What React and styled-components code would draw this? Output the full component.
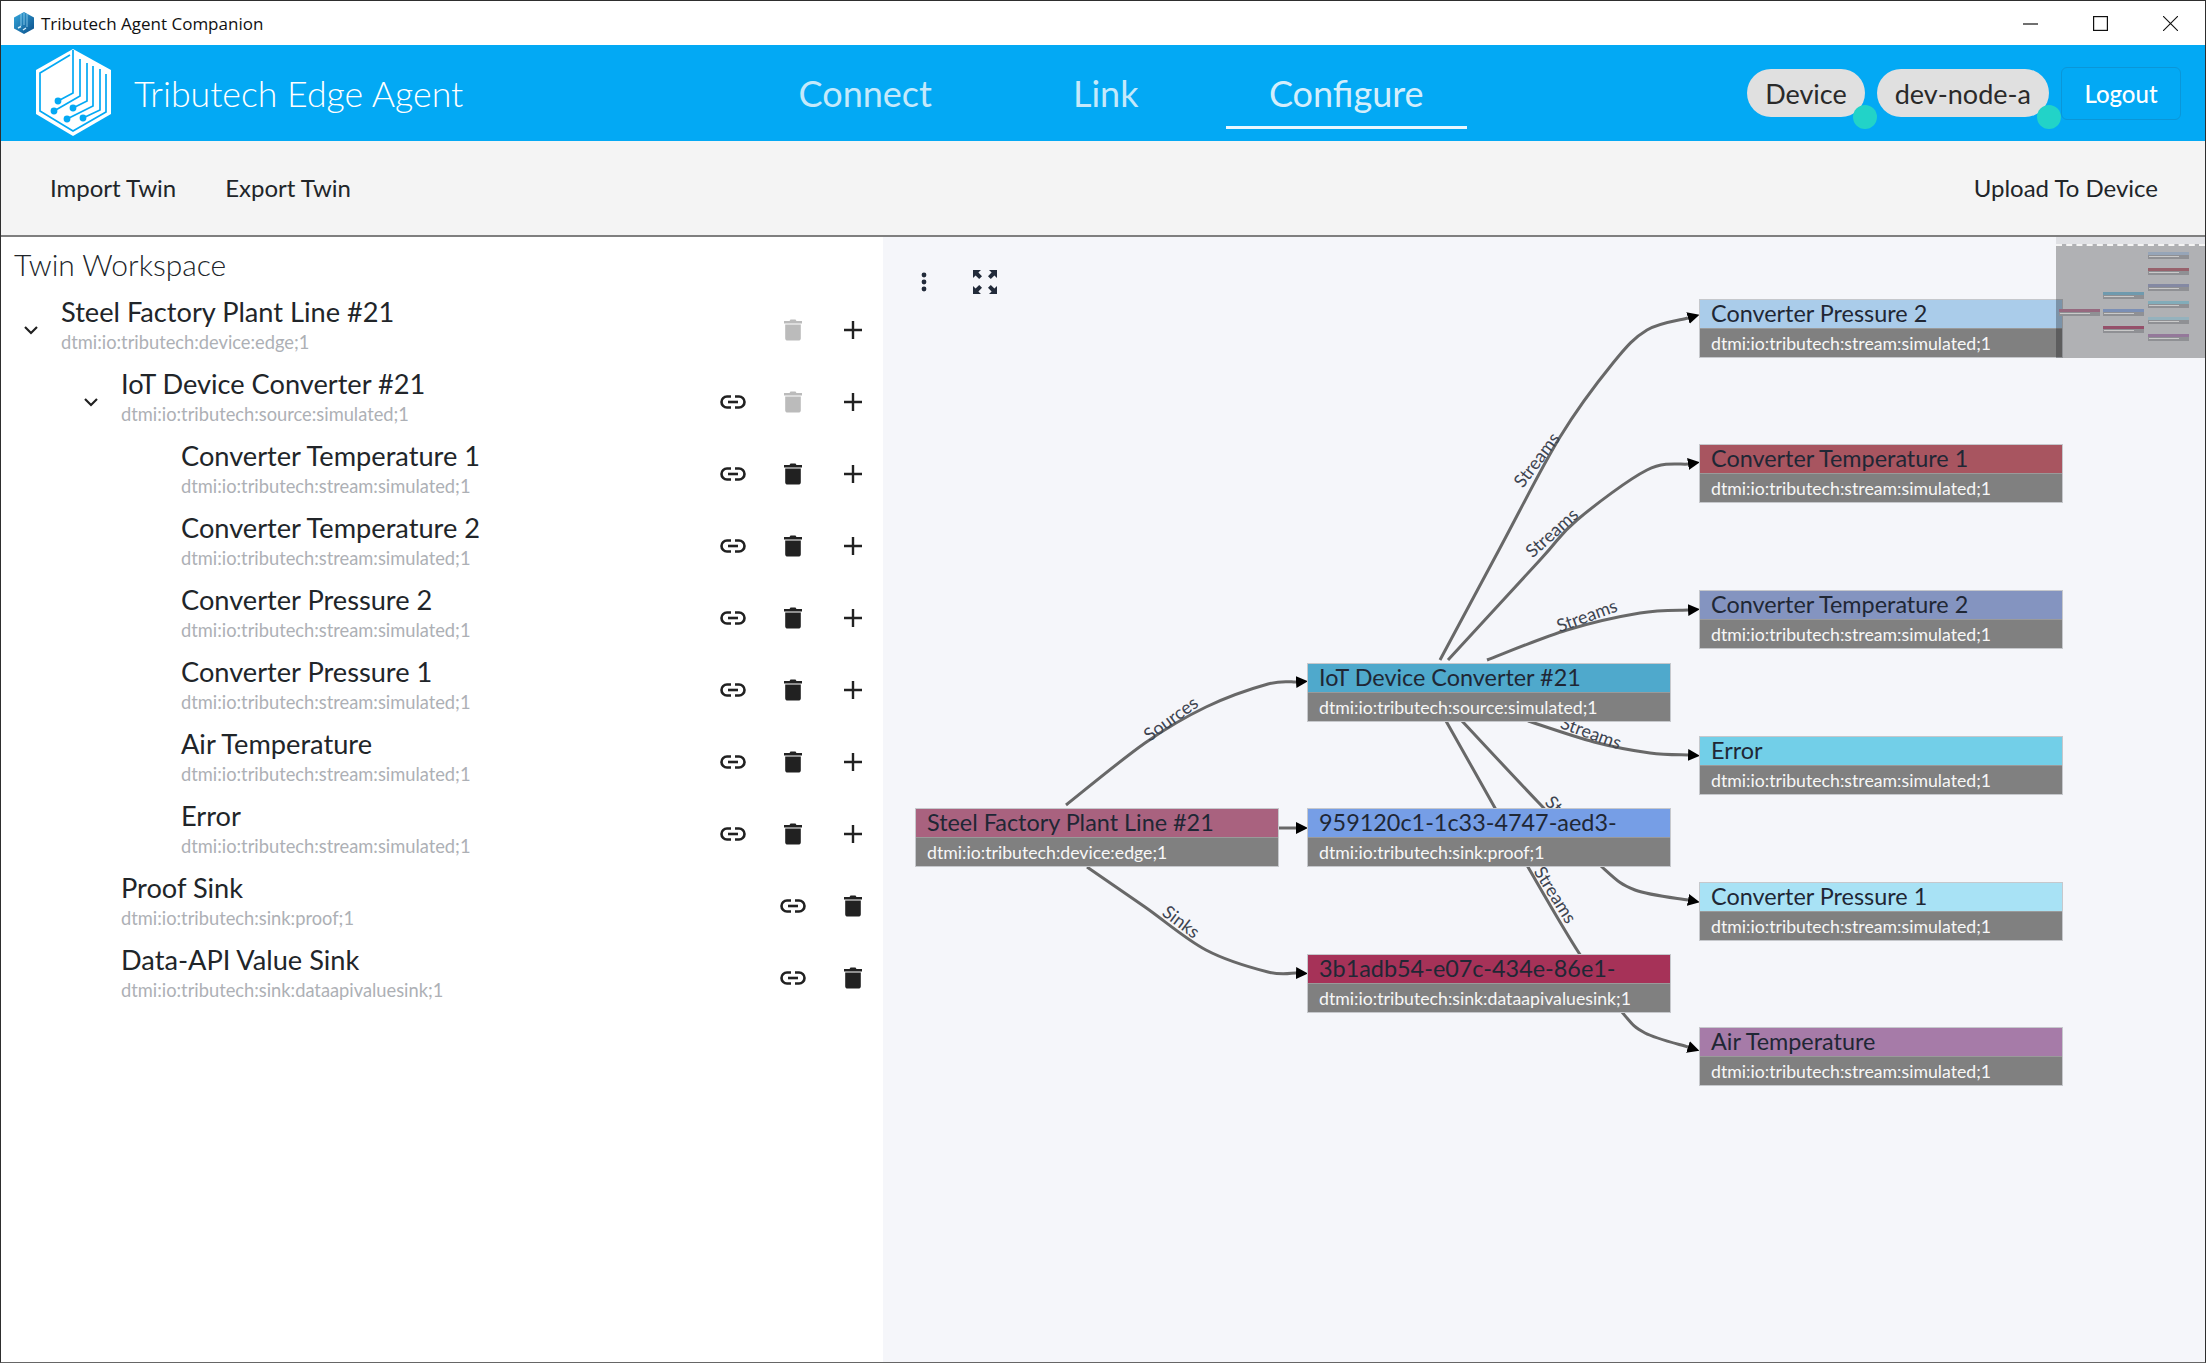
import styled, { createGlobalStyle } from "styled-components";

const GlobalStyle = createGlobalStyle`
  html, body {
    margin: 0;
    padding: 0;
    background: #fff;
  }
  * {
    box-sizing: border-box;
  }
`;

const CANVAS_X = 883;
const CANVAS_Y = 237;

const treeRows = [
  { depth: 0, open: true, name: "Steel Factory Plant Line #21", type: "dtmi:io:tributech:device:edge;1", actions: ["trash-off", "plus"] },
  { depth: 1, open: true, name: "IoT Device Converter #21", type: "dtmi:io:tributech:source:simulated;1", actions: ["link", "trash-off", "plus"] },
  { depth: 2, name: "Converter Temperature 1", type: "dtmi:io:tributech:stream:simulated;1", actions: ["link", "trash", "plus"] },
  { depth: 2, name: "Converter Temperature 2", type: "dtmi:io:tributech:stream:simulated;1", actions: ["link", "trash", "plus"] },
  { depth: 2, name: "Converter Pressure 2", type: "dtmi:io:tributech:stream:simulated;1", actions: ["link", "trash", "plus"] },
  { depth: 2, name: "Converter Pressure 1", type: "dtmi:io:tributech:stream:simulated;1", actions: ["link", "trash", "plus"] },
  { depth: 2, name: "Air Temperature", type: "dtmi:io:tributech:stream:simulated;1", actions: ["link", "trash", "plus"] },
  { depth: 2, name: "Error", type: "dtmi:io:tributech:stream:simulated;1", actions: ["link", "trash", "plus"] },
  { depth: 1, name: "Proof Sink", type: "dtmi:io:tributech:sink:proof;1", actions: ["link", "trash"] },
  { depth: 1, name: "Data-API Value Sink", type: "dtmi:io:tributech:sink:dataapivaluesink;1", actions: ["link", "trash"] },
];

const nodes = [
  { x: 915, y: 808, color: "#a9627f", name: "Steel Factory Plant Line #21", type: "dtmi:io:tributech:device:edge;1" },
  { x: 1307, y: 663, color: "#4fa9cc", name: "IoT Device Converter #21", type: "dtmi:io:tributech:source:simulated;1" },
  { x: 1307, y: 808, color: "#769ee6", name: "959120c1-1c33-4747-aed3-", type: "dtmi:io:tributech:sink:proof;1" },
  { x: 1307, y: 954, color: "#a63258", name: "3b1adb54-e07c-434e-86e1-", type: "dtmi:io:tributech:sink:dataapivaluesink;1" },
  { x: 1699, y: 299, color: "#aaccea", name: "Converter Pressure 2", type: "dtmi:io:tributech:stream:simulated;1" },
  { x: 1699, y: 444, color: "#a85560", name: "Converter Temperature 1", type: "dtmi:io:tributech:stream:simulated;1" },
  { x: 1699, y: 590, color: "#8494c0", name: "Converter Temperature 2", type: "dtmi:io:tributech:stream:simulated;1" },
  { x: 1699, y: 736, color: "#72cfe8", name: "Error", type: "dtmi:io:tributech:stream:simulated;1" },
  { x: 1699, y: 882, color: "#a8e2f5", name: "Converter Pressure 1", type: "dtmi:io:tributech:stream:simulated;1" },
  { x: 1699, y: 1027, color: "#a67ba8", name: "Air Temperature", type: "dtmi:io:tributech:stream:simulated;1" },
];

const edges = [
  [[1440, 660], [1500, 548], [1560, 437], [1613, 363], [1647, 330], [1688, 318]],
  [[1448, 660], [1540, 560], [1577, 520], [1647, 470], [1688, 464]],
  [[1487, 660], [1567, 630], [1640, 613], [1688, 610]],
  [[1528, 721], [1594, 742], [1650, 753], [1688, 755]],
  [[1462, 721], [1538, 802], [1602, 867], [1635, 890], [1688, 900]],
  [[1446, 721], [1495, 808], [1528, 867], [1579, 953], [1622, 1012], [1645, 1033], [1688, 1047]],
  [[1066, 805], [1145, 743], [1206, 707], [1268, 684], [1296, 682]],
  [[1279, 828], [1296, 828]],
  [[1087, 867], [1145, 907], [1206, 950], [1268, 972], [1296, 973]],
];

const edgeLabels = [
  { x: 1537, y: 460, angle: -53, text: "Streams" },
  { x: 1552, y: 533, angle: -42, text: "Streams" },
  { x: 1587, y: 616, angle: -20, text: "Streams" },
  { x: 1591, y: 733, angle: 20, text: "Streams" },
  { x: 1570, y: 822, angle: 47, text: "Streams" },
  { x: 1555, y: 895, angle: 58, text: "Streams" },
  { x: 1171, y: 719, angle: -36, text: "Sources" },
  { x: 1181, y: 922, angle: 37, text: "Sinks" },
];

// minimap boxes, in minimap pixels
const miniNodes = [
  { x: 3, y: 72, color: "#96697f" },
  { x: 47, y: 55, color: "#6f9aae" },
  { x: 47, y: 72, color: "#7b8fb5" },
  { x: 47, y: 89, color: "#95506a" },
  { x: 92, y: 15, color: "#96a5b8" },
  { x: 92, y: 31, color: "#97626c" },
  { x: 92, y: 47, color: "#8489a3" },
  { x: 92, y: 64, color: "#82acb9" },
  { x: 92, y: 80, color: "#95b2bd" },
  { x: 92, y: 97, color: "#94789a" },
];

// through-point smoothing, good enough for dagre-looking edges
const toPath = (pts) => {
  let d = `M${pts[0][0]} ${pts[0][1]}`;
  for (let i = 0; i < pts.length - 1; i++) {
    const p0 = pts[i - 1] || pts[i];
    const p1 = pts[i];
    const p2 = pts[i + 1];
    const p3 = pts[i + 2] || p2;
    const c1x = p1[0] + (p2[0] - p0[0]) / 6;
    const c1y = p1[1] + (p2[1] - p0[1]) / 6;
    const c2x = p2[0] - (p3[0] - p1[0]) / 6;
    const c2y = p2[1] - (p3[1] - p1[1]) / 6;
    d += ` C${c1x} ${c1y} ${c2x} ${c2y} ${p2[0]} ${p2[1]}`;
  }
  return d;
};

const Window = styled.div`
  width: 2206px;
  height: 1363px;
  display: flex;
  flex-direction: column;
  overflow: hidden;
  border: 1px solid #2e2e2e;
  border-bottom-color: #666;
  font-family: Lato, "Open Sans", sans-serif;
  color: #212529;
`;

const TitleBar = styled.div`
  height: 44px;
  flex: none;
  display: flex;
  align-items: center;
  padding-left: 13px;
  background: #fff;
`;

const TitleText = styled.span`
  margin-left: 7px;
  font-family: "Open Sans", sans-serif;
  font-size: 17px;
  color: #111;
`;

const WindowControls = styled.div`
  margin-left: auto;
  display: flex;
  height: 100%;
`;

const ControlButton = styled.div`
  width: 70px;
  display: flex;
  align-items: center;
  justify-content: center;
`;

const Header = styled.header`
  height: 96px;
  flex: none;
  display: flex;
  align-items: center;
  background: #03a9f4;
  color: #fff;
`;

const Brand = styled.div`
  width: 744px;
  display: flex;
  align-items: center;
  padding-left: 29px;
`;

const BrandName = styled.span`
  margin-left: 18px;
  font-size: 35.7px;
  font-weight: 300;
`;

const Nav = styled.nav`
  display: flex;
  height: 100%;
`;

const NavTab = styled.div`
  width: 240.5px;
  margin-bottom: 12px;
  display: flex;
  align-items: center;
  justify-content: center;
  padding-top: 14px;
  font-size: 36px;
  color: ${(p) => (p.$active ? "#d3eefc" : "#c4e9fb")};
  border-bottom: 3px solid ${(p) => (p.$active ? "#eaf7fe" : "transparent")};
`;

const HeaderRight = styled.div`
  margin-left: auto;
  display: flex;
  align-items: center;
  padding-right: 24px;
`;

const Chip = styled.div`
  position: relative;
  height: 48px;
  padding: 0 18px;
  margin-right: 12px;
  display: flex;
  align-items: center;
  border-radius: 24px;
  background: #e0e0e0;
  color: #2a2a2a;
  font-size: 27px;

  &::after {
    content: "";
    position: absolute;
    right: -12px;
    bottom: -12px;
    width: 24px;
    height: 24px;
    border-radius: 50%;
    background: #22d3c8;
  }
`;

const LogoutButton = styled.div`
  width: 120px;
  height: 53px;
  display: flex;
  align-items: center;
  justify-content: center;
  border: 1px solid #0a96d8;
  border-radius: 6px;
  color: #fff;
  font-size: 24px;
  font-weight: 500;
`;

const Toolbar = styled.div`
  height: 96px;
  flex: none;
  display: flex;
  align-items: center;
  padding: 0 47px 2px 49px;
  background: #f4f4f4;
  border-bottom: 2px solid #7f7f7f;
`;

const ToolButton = styled.div`
  font-size: 24px;
  color: #212529;
  margin-right: ${(p) => (p.$end ? "0" : "49px")};
  margin-left: ${(p) => (p.$end ? "auto" : "0")};
`;

const Main = styled.main`
  flex: 1;
  display: flex;
  min-height: 0;
`;

const TreePanel = styled.section`
  width: 882px;
  flex: none;
  background: #fff;
`;

const PanelTitle = styled.h2`
  margin: 0;
  height: 57px;
  padding: 9px 0 0 13px;
  font-size: 30px;
  line-height: 36px;
  font-weight: 300;
  color: #212529;
`;

const Row = styled.div`
  height: 72px;
  display: flex;
  align-items: center;
  padding-left: ${(p) => p.$depth * 60}px;
`;

const ChevronSlot = styled.div`
  width: 60px;
  flex: none;
  display: flex;
  align-items: center;
  justify-content: center;
`;

const RowText = styled.div`
  flex: 1;
  align-self: flex-start;
  padding-top: 1px;
  margin-left: ${(p) => (p.$leaf ? "60px" : "0")};
`;

const RowName = styled.div`
  font-size: 27.2px;
  line-height: 34px;
  color: #212529;
`;

const RowType = styled.div`
  font-size: 18.3px;
  line-height: 22px;
  margin-top: 2px;
  color: #adb0b5;
`;

const Actions = styled.div`
  display: flex;
  flex: none;
`;

const ActionSlot = styled.div`
  width: 60px;
  display: flex;
  align-items: center;
  justify-content: center;
  color: ${(p) => (p.$off ? "#bbbbbb" : "#212121")};
`;

const Canvas = styled.section`
  position: relative;
  flex: 1;
  overflow: hidden;
  background: #f5f6fa;
`;

const EdgeLayer = styled.svg`
  position: absolute;
  inset: 0;
  width: 100%;
  height: 100%;
`;

const EdgeLine = styled.path`
  fill: none;
  stroke: #686868;
  stroke-width: 3;
`;

const EdgeText = styled.text`
  font-family: Lato, sans-serif;
  font-size: 18px;
  fill: #3d4450;
  text-anchor: middle;
`;

const GraphNode = styled.div`
  position: absolute;
  left: ${(p) => p.$x}px;
  top: ${(p) => p.$y}px;
  width: 364px;
  height: 59px;
  border: 1px solid #c6c8cc;
  background: #808080;
`;

const NodeHead = styled.div`
  height: 29px;
  padding-left: 11px;
  background: ${(p) => p.$color};
  border-bottom: 1px solid #9a9a9a;
  font-size: 23.4px;
  line-height: 27px;
  color: #1f2735;
  white-space: nowrap;
  overflow: hidden;
`;

const NodeSub = styled.div`
  height: 28px;
  padding-left: 11px;
  font-size: 17.7px;
  line-height: 30px;
  color: #f7f7f7;
  white-space: nowrap;
`;

const CanvasTool = styled.div`
  position: absolute;
  left: ${(p) => p.$x}px;
  top: 33px;
  width: 24px;
  height: 24px;
  color: #222b3a;
`;

const Minimap = styled.div`
  position: absolute;
  top: 0;
  right: 0;
  width: 149px;
  height: 121px;
  padding-top: 7px;
  background: rgba(40, 42, 50, 0.1);
`;

const MiniViewport = styled.div`
  position: relative;
  height: 114px;
  border-top: 2px dashed #f4f4f4;
  background: rgba(0, 0, 0, 0.21);
`;

const MiniBox = styled.div`
  position: absolute;
  left: ${(p) => p.$x}px;
  top: ${(p) => p.$y}px;
  width: 41px;
  height: 7px;
  background: #8f9094;
  border-top: 3px solid ${(p) => p.$color};
  filter: blur(0.5px);

  &::after {
    content: "";
    position: absolute;
    left: 1px;
    top: 1px;
    width: 30px;
    height: 1px;
    background: #c9c9c9;
  }
`;

const TrashIcon = () => (
  <svg width="18" height="22" viewBox="0 0 18 22" fill="currentColor">
    <path d="M6.5 0.5h5l1 1.5H18v2.4H0V2h5.5z" />
    <path d="M1.2 5.6h15.6V19a2.6 2.6 0 0 1-2.6 2.6H3.8A2.6 2.6 0 0 1 1.2 19z" />
  </svg>
);

const LinkIcon = () => (
  <svg width="26" height="14" viewBox="0 0 26 14" fill="none" stroke="currentColor" strokeWidth="2.6">
    <path d="M11 1.5H7a5.5 5.5 0 0 0 0 11h4" />
    <path d="M15 1.5h4a5.5 5.5 0 0 1 0 11h-4" />
    <path d="M8 7h10" />
  </svg>
);

const PlusIcon = () => (
  <svg width="18" height="18" viewBox="0 0 18 18" stroke="currentColor" strokeWidth="2.4">
    <path d="M9 0v18M0 9h18" />
  </svg>
);

const Chevron = () => (
  <svg width="14" height="9" viewBox="0 0 14 9" fill="none" stroke="#212121" strokeWidth="2.2">
    <path d="M1 1l6 6 6-6" />
  </svg>
);

const actionIcons = {
  link: <LinkIcon />,
  trash: <TrashIcon />,
  "trash-off": <TrashIcon />,
  plus: <PlusIcon />,
};

const Logo = () => (
  <svg width="86" height="94" viewBox="0 0 86 94">
    <path d="M43 3L81 24V68L43 90L6 68V24z" fill="#fff" />
    <g fill="none" stroke="#03a9f4" strokeWidth="1.7">
      <path d="M40 9L10 27V65L43 85L76 66V28" />
      <path d="M43 4V47L28 55" />
      <path d="M50 13V50L24 65" />
      <path d="M57 17V55L43 62" />
      <path d="M63 20V60L37 73" />
      <path d="M70 23V64L53 72" />
    </g>
    <g fill="#03a9f4">
      <circle cx="28" cy="55" r="3.4" />
      <circle cx="24" cy="65" r="3.4" />
      <circle cx="43" cy="62" r="3.4" />
      <circle cx="37" cy="73" r="3.4" />
      <circle cx="53" cy="72" r="3.4" />
    </g>
  </svg>
);

const AppIcon = () => (
  <svg width="20" height="22" viewBox="0 0 20 22">
    <defs>
      <linearGradient id="appIconFill" x1="0" y1="0" x2="1" y2="1">
        <stop offset="0" stopColor="#35a7dc" />
        <stop offset="1" stopColor="#0b4f8a" />
      </linearGradient>
    </defs>
    <path d="M10 0L20 5.5V16.5L10 22L0 16.5V5.5z" fill="url(#appIconFill)" />
    <path d="M7 2V14M10 1V13M13 2V15" stroke="#9ad6f2" strokeWidth="0.8" fill="none" />
    <path d="M4 16l3-1.5M9 18l3-2" stroke="#d4eefa" strokeWidth="1.4" fill="none" />
  </svg>
);

const App = () => {
  return (
    <>
      <GlobalStyle />
      <Window>
        <TitleBar>
          <AppIcon />
          <TitleText>Tributech Agent Companion</TitleText>
          <WindowControls>
            <ControlButton>
              <svg width="15" height="15" viewBox="0 0 15 15" stroke="#111" strokeWidth="1.2">
                <path d="M0 8h15" />
              </svg>
            </ControlButton>
            <ControlButton>
              <svg width="15" height="15" viewBox="0 0 15 15" stroke="#111" strokeWidth="1.2" fill="none">
                <rect x="0.6" y="0.6" width="13.8" height="13.8" />
              </svg>
            </ControlButton>
            <ControlButton>
              <svg width="15" height="15" viewBox="0 0 15 15" stroke="#111" strokeWidth="1.1">
                <path d="M0 0l15 15M15 0L0 15" />
              </svg>
            </ControlButton>
          </WindowControls>
        </TitleBar>

        <Header>
          <Brand>
            <Logo />
            <BrandName>Tributech Edge Agent</BrandName>
          </Brand>
          <Nav>
            <NavTab>Connect</NavTab>
            <NavTab>Link</NavTab>
            <NavTab $active>Configure</NavTab>
          </Nav>
          <HeaderRight>
            <Chip>Device</Chip>
            <Chip>dev-node-a</Chip>
            <LogoutButton>Logout</LogoutButton>
          </HeaderRight>
        </Header>

        <Toolbar>
          <ToolButton>Import Twin</ToolButton>
          <ToolButton>Export Twin</ToolButton>
          <ToolButton $end>Upload To Device</ToolButton>
        </Toolbar>

        <Main>
          <TreePanel>
            <PanelTitle>Twin Workspace</PanelTitle>
            {treeRows.map((row) => (
              <Row key={row.name} $depth={row.depth}>
                {row.open && (
                  <ChevronSlot>
                    <Chevron />
                  </ChevronSlot>
                )}
                <RowText $leaf={!row.open}>
                  <RowName>{row.name}</RowName>
                  <RowType>{row.type}</RowType>
                </RowText>
                <Actions>
                  {row.actions.map((action) => (
                    <ActionSlot key={action} $off={action === "trash-off"}>
                      {actionIcons[action]}
                    </ActionSlot>
                  ))}
                </Actions>
              </Row>
            ))}
          </TreePanel>

          <Canvas>
            <EdgeLayer viewBox={`${CANVAS_X} ${CANVAS_Y} 1322 1125`}>
              <defs>
                <marker id="arrow" markerWidth="12" markerHeight="12" refX="0" refY="6" orient="auto" markerUnits="userSpaceOnUse">
                  <path d="M0 0L12 6L0 12z" fill="#000" />
                </marker>
              </defs>
              {edges.map((pts, i) => (
                <EdgeLine key={i} d={toPath(pts)} markerEnd="url(#arrow)" />
              ))}
              {edgeLabels.map((l) => (
                <EdgeText key={`${l.x}-${l.y}`} x={l.x} y={l.y + 6} transform={`rotate(${l.angle} ${l.x} ${l.y})`}>
                  {l.text}
                </EdgeText>
              ))}
            </EdgeLayer>

            <CanvasTool $x={29}>
              <svg width="24" height="24" viewBox="0 0 24 24" fill="currentColor">
                <circle cx="12" cy="5" r="2.4" />
                <circle cx="12" cy="12" r="2.4" />
                <circle cx="12" cy="19" r="2.4" />
              </svg>
            </CanvasTool>
            <CanvasTool $x={89}>
              <svg width="26" height="24" viewBox="0 0 26 24" fill="currentColor">
                <path d="M1 0h8L6.4 2.6 10 6.2 7.2 9 3.6 5.4 1 8z" />
                <path d="M25 0h-8l2.6 2.6L16 6.2 18.8 9l3.6-3.6L25 8z" />
                <path d="M1 24h8l-2.6-2.6L10 17.8 7.2 15l-3.6 3.6L1 16z" />
                <path d="M25 24h-8l2.6-2.6-3.6-3.6 2.8-2.8 3.6 3.6L25 16z" />
              </svg>
            </CanvasTool>

            {nodes.map((n) => (
              <GraphNode key={n.name} $x={n.x - CANVAS_X} $y={n.y - CANVAS_Y}>
                <NodeHead $color={n.color}>{n.name}</NodeHead>
                <NodeSub>{n.type}</NodeSub>
              </GraphNode>
            ))}

            <Minimap>
              <MiniViewport>
                {miniNodes.map((m) => (
                  <MiniBox key={`${m.x}-${m.y}`} $x={m.x} $y={m.y - 9} $color={m.color} />
                ))}
              </MiniViewport>
            </Minimap>
          </Canvas>
        </Main>
      </Window>
    </>
  );
};

export default App;
